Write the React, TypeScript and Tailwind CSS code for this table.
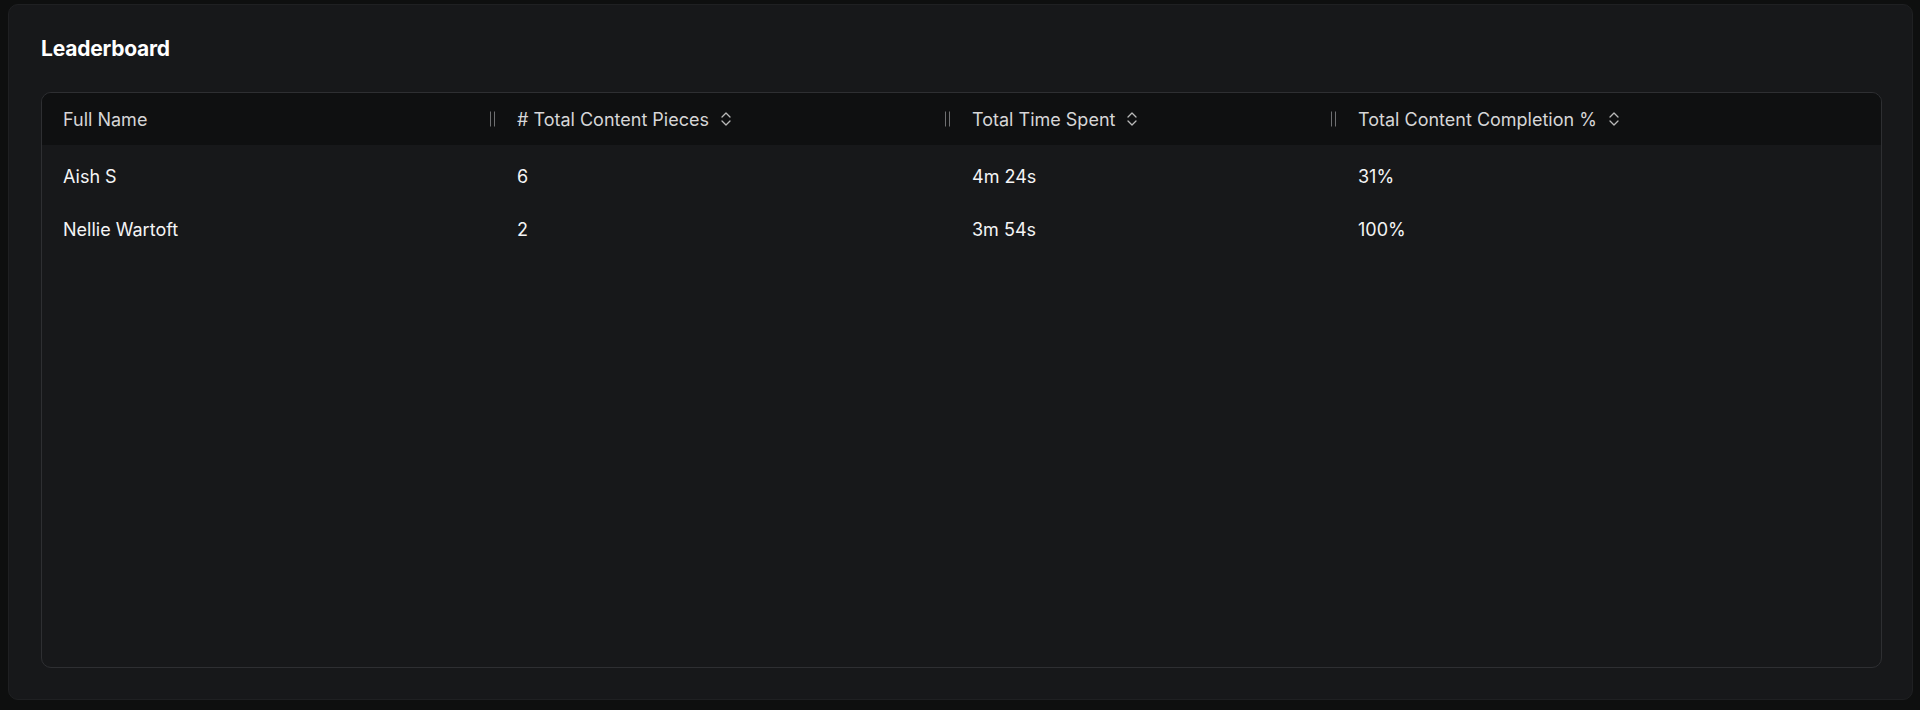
import { ReactNode } from 'react'

interface Row {
  name: string
  pieces: number
  time: string
  completion: string
}

const rows: Row[] = [
  { name: 'Aish S', pieces: 6, time: '4m 24s', completion: '31%' },
  { name: 'Nellie Wartoft', pieces: 2, time: '3m 54s', completion: '100%' },
]

const widths = ['w-[454px]', 'w-[455px]', 'w-[386px]', 'flex-1']

function SortIcon() {
  return (
    <svg width="12" height="16" viewBox="0 0 12 16" fill="none" className="ml-[11px] shrink-0">
      <path d="M2 6l4-4 4 4M2 10l4 4 4-4" stroke="#b9b9b9" strokeWidth="1.3" strokeLinecap="round" strokeLinejoin="round" />
    </svg>
  )
}

function ResizeHandle() {
  return (
    <div className="absolute right-[1px] top-1/2 flex h-[15px] -translate-y-1/2 gap-[3px]">
      <div className="w-px bg-[#6f7072]" />
      <div className="w-px bg-[#6f7072]" />
    </div>
  )
}

function HeaderCell({ width, children, sortable, handle }: { width: string; children: ReactNode; sortable?: boolean; handle?: boolean }) {
  return (
    <div className={`relative flex h-full items-center pl-[21px] ${width}`}>
      <span className="text-[18px] text-[#d6d6d7]">{children}</span>
      {sortable ? <SortIcon /> : null}
      {handle ? <ResizeHandle /> : null}
    </div>
  )
}

export default function App() {
  return (
    <div className="h-[710px] w-full bg-[#0e0f0f] pl-[8px] pr-[7px] pt-[4px]" style={{ fontFamily: 'Inter, "Liberation Sans", sans-serif' }}>
      <section className="flex h-[696px] flex-col rounded-[10px] border border-[#1f2022] bg-[#17181a] pb-[31px] pl-[32px] pr-[30px] pt-[30px]">
        <h2 className="text-[21px] font-bold leading-[28px] tracking-[-0.01em] text-white">Leaderboard</h2>

        <div className="mt-[29px] flex flex-1 flex-col overflow-hidden rounded-[10px] border border-[#2e2f32]">
          <div className="flex h-[52px] bg-[#0f1011]">
            <HeaderCell width={widths[0]} handle>Full Name</HeaderCell>
            <HeaderCell width={widths[1]} sortable handle># Total Content Pieces</HeaderCell>
            <HeaderCell width={widths[2]} sortable handle>Total Time Spent</HeaderCell>
            <HeaderCell width={widths[3]} sortable>Total Content Completion %</HeaderCell>
          </div>

          <div className="pt-[5px]">
            {rows.map((row) => (
              <div key={row.name} className="flex h-[53px] items-center text-[18px] text-[#f4f4f5]">
                <div className={`pl-[21px] ${widths[0]}`}>{row.name}</div>
                <div className={`pl-[21px] ${widths[1]}`}>{row.pieces}</div>
                <div className={`pl-[21px] ${widths[2]}`}>{row.time}</div>
                <div className={`pl-[21px] ${widths[3]}`}>{row.completion}</div>
              </div>
            ))}
          </div>
        </div>
      </section>
    </div>
  )
}
